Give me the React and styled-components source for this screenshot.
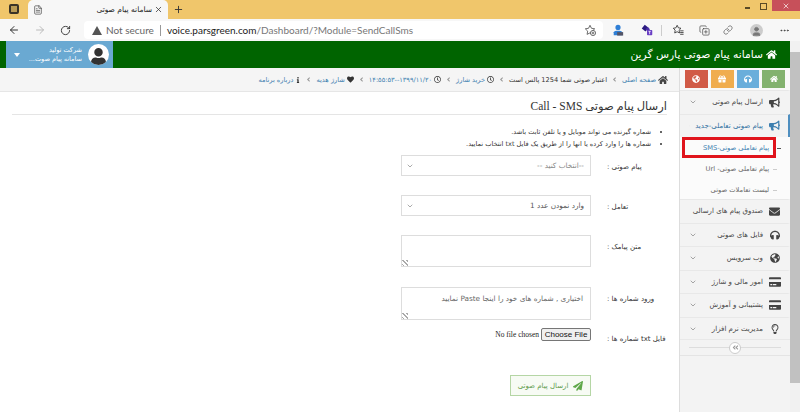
import * as React from 'react';
import styled, { createGlobalStyle } from 'styled-components';
import {
  FaHome, FaBullhorn, FaEnvelope, FaHeadphones, FaGlobeAmericas, FaCreditCard, FaRegLightbulb,
  FaPaperPlane, FaRegClock, FaHeart, FaInfo, FaUser, FaGift, FaAngleLeft, FaAngleDoubleLeft,
} from 'react-icons/fa';
import { ArrowLeft, ArrowRight, RotateCw, X, Plus, MoreHorizontal, Link, FileText, User, ChevronDown, CopyPlus } from 'lucide-react';

const PERSIAN = '"DejaVu Sans", "Noto Sans", sans-serif';

const GlobalStyle = createGlobalStyle`
  html, body { margin: 0; padding: 0; height: 412px; overflow: hidden; background: #fff; }
  * { box-sizing: border-box; }
`;

const Window = styled.div`
  width: 800px;
  height: 412px;
  display: flex;
  flex-direction: column;
  font-family: ${PERSIAN};
  overflow: hidden;
`;

/* browser chrome */
const TabStrip = styled.div`
  height: 19px;
  flex: none;
  background: #f0c66b;
  display: flex;
  align-items: flex-end;
  padding-left: 9px;
  color: #333;
`;

const WorkspaceIcon = styled.span`
  width: 10px;
  height: 10px;
  margin: 0 9px 5px 0;
  border: 2px solid #3a3327;
  border-radius: 2px;
  background: #b89a55;
`;

const Tab = styled.div`
  width: 140px;
  height: 19px;
  background: #f7f7f7;
  border-radius: 5px 5px 0 0;
  display: flex;
  align-items: center;
  padding: 0 5px;
`;

const TabTitle = styled.span`
  flex: 1;
  text-align: right;
  font-size: 7.5px;
  padding-right: 2px;
  color: #222;
`;

const NewTab = styled.span`
  margin: 0 0 4px 5px;
  display: flex;
`;

const WindowButtons = styled.div`
  flex: 1;
  align-self: flex-start;
  height: 19px;
  display: flex;
  justify-content: flex-end;
  align-items: flex-start;
`;

const MinButton = styled.span`
  width: 5px;
  height: 2px;
  margin: 7px 10px 0 0;
  background: #5a4a25;
`;

const RestoreButton = styled.span`
  width: 7px;
  height: 7px;
  margin: 3px 5px 0 0;
  border: 1px solid #5a4a25;
`;

const CloseButton = styled.span`
  width: 28px;
  height: 11px;
  background: #c7505a;
  color: #fff;
  display: flex;
  align-items: center;
  justify-content: center;
`;

const Toolbar = styled.div`
  height: 22px;
  flex: none;
  background: #f7f7f7;
  display: flex;
  align-items: center;
  padding-left: 8px;
`;

const NavButton = styled.span`
  width: 26px;
  display: flex;
  color: ${(p) => (p.$off ? '#bbb' : '#333')};
`;

const AddressBar = styled.div`
  width: 519px;
  height: 18px;
  margin-left: -2px;
  background: #fff;
  border-radius: 4px;
  display: flex;
  align-items: center;
  padding: 0 7px 0 8px;
  font-family: "Lato", sans-serif;
  font-size: 10px;
  white-space: nowrap;
`;

const WarningTriangle = styled.span`
  width: 0;
  height: 0;
  margin-right: 4px;
  border-left: 5px solid transparent;
  border-right: 5px solid transparent;
  border-bottom: 9px solid #555;
`;

const NotSecure = styled.span`
  color: #666;
  padding-right: 6px;
  margin-right: 6px;
  border-right: 1px solid #999;
  line-height: 11px;
`;

const Host = styled.span`
  color: #222;
`;

const UrlPath = styled.span`
  color: #777;
  flex: 1;
`;

const ToolIcons = styled.div`
  flex: 1;
  display: flex;
  align-items: center;
  color: #444;
`;

const ToolSlot = styled.span`
  width: ${(p) => p.$w || 12}px;
  margin-left: ${(p) => p.$gap}px;
  display: flex;
  justify-content: center;
`;

const ToolDivider = styled.span`
  width: 1px;
  height: 11px;
  background: #ccc;
  margin-left: 8px;
`;

const Avatar = styled.span`
  width: 13px;
  height: 13px;
  flex: none;
  border-radius: 50%;
  background: #ccc;
  color: #777;
  display: flex;
  align-items: flex-end;
  justify-content: center;
  overflow: hidden;
`;

/* page */
const Viewport = styled.div`
  flex: 1;
  display: flex;
  min-height: 0;
`;

const Page = styled.div`
  width: 790px;
  display: flex;
  flex-direction: column;
`;

const Scrollbar = styled.div`
  width: 10px;
  background: #f1f1f1;
  padding-top: 11px;
`;

const ScrollThumb = styled.div`
  height: 331px;
  background: #c1c1c1;
`;

const Header = styled.header`
  height: 27px;
  background: #006400;
  display: flex;
  align-items: center;
  justify-content: space-between;
  padding: 0 13px 0 6px;
`;

const UserBlock = styled.div`
  width: 107px;
  height: 27px;
  background: #6aa9d2;
  display: flex;
  align-items: center;
  padding: 0 4px 0 8px;
  color: #fff;
`;

const Caret = styled.span`
  width: 0;
  height: 0;
  border-left: 3.5px solid transparent;
  border-right: 3.5px solid transparent;
  border-top: 4px solid #fff;
`;

const UserText = styled.div`
  flex: 1;
  text-align: right;
  padding-right: 6px;
  font-size: 6.5px;
  line-height: 9px;
`;

const UserAvatar = styled.span`
  width: 21px;
  height: 21px;
  border-radius: 50%;
  background: #fff;
  color: #333;
  display: flex;
  align-items: flex-end;
  justify-content: center;
  overflow: hidden;
`;

const SiteTitle = styled.div`
  color: #fff;
  font-size: 10.7px;
  display: flex;
  align-items: center;
  gap: 3px;
`;

const Body = styled.div`
  flex: 1;
  display: flex;
  min-height: 0;
`;

const Main = styled.main`
  width: 680px;
  border-right: 1px solid #ddd;
  background: #fff;
`;

const Breadcrumb = styled.nav`
  height: 24px;
  background: #f5f5f5;
  border-bottom: 1px solid #e6e6e6;
  display: flex;
  align-items: center;
  gap: 4px;
  padding: 0 11px 0 0;
  font-size: 6.6px;
  white-space: nowrap;
`;

const Crumb = styled.span`
  display: flex;
  align-items: center;
  gap: 2px;
  color: ${(p) => (p.$plain ? '#333' : '#3d7fb0')};
`;

const CrumbSep = styled.span`
  display: flex;
  color: #999;
`;

const Heading = styled.h1`
  margin: 0 12px;
  height: 23px;
  padding-top: 6px;
  border-bottom: 1px solid #e5e5e5;
  font-family: "Liberation Serif", ${PERSIAN};
  font-size: 11.5px;
  font-weight: 400;
  line-height: 16px;
  color: #333;
`;

const Notes = styled.ul`
  margin: 11px 0 0;
  padding: 0 28px 0 0;
  font-size: 6.6px;
  line-height: 12px;
  color: #333;
  height: 29px;
`;

const Form = styled.form`
  direction: ltr;
  display: flex;
  flex-direction: column;
  padding-left: 401px;
`;

const Row = styled.div`
  display: flex;
  gap: 16px;
  margin-bottom: ${(p) => p.$after}px;
`;

const FieldSlot = styled.div`
  width: 190px;
  flex: none;
`;

const FieldLabel = styled.label`
  direction: rtl;
  text-align: left;
  padding-top: ${(p) => p.$top}px;
  font-size: 7px;
  line-height: 10px;
  color: #333;
  white-space: nowrap;
`;

const SelectBox = styled.div`
  height: 21px;
  border: 1px solid #ddd;
  background: #fff;
  display: flex;
  align-items: center;
  justify-content: space-between;
  padding: 0 6px 0 4px;
  font-size: 7.3px;
  color: ${(p) => (p.$muted ? '#888' : '#555')};
`;

const TextBox = styled.textarea`
  display: block;
  width: 190px;
  height: ${(p) => p.$h}px;
  direction: rtl;
  margin: 0;
  padding: 5px 7px;
  border: 1px solid #ddd;
  outline: none;
  resize: none;
  font-family: ${PERSIAN};
  font-size: 7.3px;
  line-height: 12px;
  color: #555;
  background: repeating-linear-gradient(45deg, transparent 0 1px, #aaa 1px 2px, transparent 2px 3px) left bottom / 6px 6px no-repeat #fff;
  &::placeholder { color: #666; opacity: 1; }
`;

const FileRow = styled.div`
  display: flex;
  justify-content: flex-end;
  align-items: center;
  gap: 2px;
  font-family: "Liberation Serif", serif;
  font-size: 7.5px;
  color: #222;
`;

const ChooseFile = styled.button`
  width: 50px;
  height: 13px;
  padding: 0;
  border: 1px solid #767676;
  border-radius: 2px;
  background: #efefef;
  font-family: "Liberation Sans", sans-serif;
  font-size: 8px;
  color: #111;
`;

const SendRow = styled.div`
  display: flex;
  justify-content: flex-end;
`;

const SendButton = styled.button`
  width: 81px;
  height: 21px;
  direction: rtl;
  display: flex;
  align-items: center;
  justify-content: center;
  gap: 5px;
  padding: 0;
  border: 1px solid #b5d6a5;
  background: #f7fbf4;
  font-family: ${PERSIAN};
  font-size: 7px;
  color: #5c9a4a;
`;

/* sidebar */
const Sidebar = styled.aside`
  width: 110px;
  background: #f3f3f3;
  direction: rtl;
  display: flex;
  flex-direction: column;
`;

const Shortcuts = styled.div`
  height: 22px;
  display: flex;
  gap: 3px;
  padding: 2px 5px 0 5px;
  background: #f8f8f8;
`;

const Shortcut = styled.span`
  flex: 1;
  height: 18px;
  background: ${(p) => p.$color};
  color: #fff;
  display: flex;
  align-items: center;
  justify-content: center;
`;

const MenuItem = styled.div`
  height: ${(p) => p.$h || 23.5}px;
  display: flex;
  align-items: center;
  gap: 5px;
  padding: 0 7px 0 9px;
  border-top: 1px solid #e8e8e8;
  border-right: 2px solid ${(p) => (p.$active ? '#4f8fc0' : 'transparent')};
  font-size: 7px;
  color: ${(p) => (p.$active ? '#2f6f9f' : '#444')};
  white-space: nowrap;
`;

const MenuIcon = styled.span`
  width: 13px;
  flex: none;
  display: flex;
  justify-content: center;
  color: ${(p) => (p.$active ? '#3d7fb0' : '#444')};
`;

const MenuText = styled.span`
  flex: 1;
`;

const SubMenu = styled.div`
  background: #fbfbfb;
`;

const SubItem = styled.div`
  position: relative;
  height: ${(p) => p.$h}px;
  display: flex;
  align-items: center;
  justify-content: flex-start;
  padding-right: ${(p) => (p.$flagged ? 4 : 21)}px;
  margin: ${(p) => (p.$flagged ? '0 14px 0 2px' : '0')};
  border: ${(p) => (p.$flagged ? '3px solid #e0141c' : '0')};
  font-size: 6.7px;
  color: ${(p) => (p.$flagged ? '#3d7fb0' : '#666')};
  white-space: nowrap;
  &::after {
    content: '';
    position: absolute;
    top: 50%;
    right: ${(p) => (p.$flagged ? -8 : 13)}px;
    width: 4px;
    height: 1px;
    background: ${(p) => (p.$flagged ? '#555' : '#ccc')};
  }
`;

const Collapse = styled.div`
  height: 17px;
  margin-top: -1px;
  border-top: 1px solid #e8e8e8;
  border-bottom: 1px solid #e4e4e4;
  display: flex;
  align-items: center;
  justify-content: center;
  background: linear-gradient(#ddd, #ddd) center / 92px 1px no-repeat;
`;

const CollapseButton = styled.span`
  width: 12px;
  height: 12px;
  border: 1px solid #ccc;
  border-radius: 50%;
  background: #fff;
  color: #999;
  display: flex;
  align-items: center;
  justify-content: center;
`;

const Chevron = () => <ChevronDown size={8} color="#555" strokeWidth={1.5} />;

const CrumbArrow = () => (
  <CrumbSep>
    <FaAngleLeft size={7} />
  </CrumbSep>
);

const STAR = 'M7 1.5l1.7 3.5 3.8.6-2.8 2.7.7 3.8L7 10.3l-3.4 1.8.7-3.8L1.5 5.6l3.8-.6z';

const FavoriteAdd = () => (
  <svg width="12" height="12" viewBox="0 0 14 14" fill="none" stroke="#555" strokeWidth="1">
    <path d={STAR} />
    <circle cx="10.5" cy="10.5" r="3" fill="#fff" />
    <path d="M10.5 9v3M9 10.5h3" />
  </svg>
);

const FavoritesList = () => (
  <svg width="12" height="12" viewBox="0 0 14 14" fill="none" stroke="#333" strokeWidth="1">
    <path d="M6 1.5l1.5 3 3 .5-2.2 2.2.5 3.3L6 9l-2.8 1.5.5-3.3L1.5 5l3-.5z" />
    <path d="M9.5 8h4M9.5 10h4M9.5 12h4" />
  </svg>
);

const ProfileExtension = () => (
  <svg width="12" height="12" viewBox="0 0 14 14">
    <circle cx="7" cy="4" r="3" fill="#2f7fd6" />
    <path d="M2 9.5c1-2 9-2 10 0V13H2z" fill="#2f7fd6" />
    <rect x="6" y="9.5" width="7" height="4" fill="#556" />
  </svg>
);

const TeamExtension = () => (
  <svg width="14" height="12" viewBox="0 0 16 14">
    <path d="M5 0l5 4-4 5-5-4z" fill="#2b1a80" />
    <path d="M9 3l3 3-3 3-3-3z" fill="#4b2fa8" />
    <rect x="8" y="7" width="7" height="7" rx="1" fill="#6a3fc4" />
    <path d="M10 8.8h3M11.5 8.8v3.8" stroke="#fff" strokeWidth="1" />
  </svg>
);

const menuAfter = [
  { label: 'فایل های صوتی', icon: <FaHeadphones size={10} /> },
  { label: 'وب سرویس', icon: <FaGlobeAmericas size={10} /> },
  { label: 'امور مالی و شارژ', icon: <FaCreditCard size={12} /> },
  { label: 'پشتیبانی و آموزش', icon: <FaCreditCard size={12} /> },
  { label: 'مدیریت نرم افزار', icon: <FaRegLightbulb size={10} /> },
];

const App = () => (
  <Window>
    <GlobalStyle />
    <TabStrip>
      <WorkspaceIcon />
      <Tab>
        <FileText size={10} strokeWidth={1.5} />
        <TabTitle dir="rtl">سامانه پیام صوتی</TabTitle>
        <X size={9} />
      </Tab>
      <NewTab>
        <Plus size={11} />
      </NewTab>
      <WindowButtons>
        <MinButton />
        <RestoreButton />
        <CloseButton>
          <X size={8} />
        </CloseButton>
      </WindowButtons>
    </TabStrip>

    <Toolbar>
      <NavButton><ArrowLeft size={12} /></NavButton>
      <NavButton $off><ArrowRight size={12} /></NavButton>
      <NavButton><RotateCw size={11} /></NavButton>
      <AddressBar>
        <WarningTriangle />
        <NotSecure>Not secure</NotSecure>
        <Host>voice.parsgreen.com</Host>
        <UrlPath>/Dashboard/?Module=SendCallSms</UrlPath>
        <FavoriteAdd />
      </AddressBar>
      <ToolIcons>
        <ToolSlot $gap={9}><ProfileExtension /></ToolSlot>
        <ToolSlot $gap={17}><TeamExtension /></ToolSlot>
        <ToolDivider />
        <ToolSlot $gap={10}><FavoritesList /></ToolSlot>
        <ToolSlot $gap={14}><CopyPlus size={11} strokeWidth={1.5} /></ToolSlot>
        <ToolSlot $gap={12}><Link size={10} strokeWidth={1.5} /></ToolSlot>
        <ToolSlot $gap={16}><Avatar><User size={11} fill="#777" /></Avatar></ToolSlot>
        <ToolSlot $gap={16}><MoreHorizontal size={11} /></ToolSlot>
      </ToolIcons>
    </Toolbar>

    <Viewport>
      <Page>
        <Header>
          <UserBlock>
            <Caret />
            <UserText dir="rtl">
              شرکت تولید
              <br />
              سامانه پیام صوت...
            </UserText>
            <UserAvatar><FaUser size={17} /></UserAvatar>
          </UserBlock>
          <SiteTitle dir="rtl">
            <FaHome size={11} />
            سامانه پیام صوتی پارس گرین
          </SiteTitle>
        </Header>

        <Body>
          <Main dir="rtl">
            <Breadcrumb>
              <Crumb><FaHome size={10} color="#444" />صفحه اصلی</Crumb>
              <CrumbArrow />
              <Crumb $plain>اعتبار صوتی شما 1254 پالس است</Crumb>
              <CrumbArrow />
              <Crumb><FaRegClock size={7} color="#333" />خرید شارژ</Crumb>
              <CrumbArrow />
              <Crumb><FaRegClock size={7} color="#333" />۱۳۹۹/۱۱/۲۰--۱۴:۵۵:۵۳</Crumb>
              <CrumbArrow />
              <Crumb><FaHeart size={7} color="#333" />شارژ هدیه</Crumb>
              <CrumbArrow />
              <Crumb><FaInfo size={6} color="#333" />درباره برنامه</Crumb>
            </Breadcrumb>

            <Heading>ارسال پیام صوتی Call - SMS</Heading>

            <Notes>
              <li>شماره گیرنده می تواند موبایل و یا تلفن ثابت باشد.</li>
              <li>شماره ها را وارد کرده یا انها را از طریق یک فایل txt انتخاب نمایید.</li>
            </Notes>

            <Form>
              <Row $after={19}>
                <FieldSlot>
                  <SelectBox $muted>
                    <Chevron />
                    <span dir="rtl">--انتخاب کنید --</span>
                  </SelectBox>
                </FieldSlot>
                <FieldLabel $top={7}>پیام صوتی :</FieldLabel>
              </Row>
              <Row $after={19}>
                <FieldSlot>
                  <SelectBox>
                    <Chevron />
                    <span dir="rtl">وارد نمودن عدد 1</span>
                  </SelectBox>
                </FieldSlot>
                <FieldLabel $top={7}>تعامل :</FieldLabel>
              </Row>
              <Row $after={20}>
                <FieldSlot><TextBox $h={32} /></FieldSlot>
                <FieldLabel $top={7}>متن پیامک :</FieldLabel>
              </Row>
              <Row $after={8}>
                <FieldSlot>
                  <TextBox $h={33} placeholder="اختیاری , شماره های خود را اینجا Paste نمایید" />
                </FieldSlot>
                <FieldLabel $top={7}>ورود شماره ها :</FieldLabel>
              </Row>
              <Row $after={31}>
                <FieldSlot>
                  <FileRow>
                    <span>No file chosen</span>
                    <ChooseFile type="button">Choose File</ChooseFile>
                  </FileRow>
                </FieldSlot>
                <FieldLabel $top={6}>فایل txt شماره ها :</FieldLabel>
              </Row>
              <Row $after={0}>
                <FieldSlot>
                  <SendRow>
                    <SendButton type="button">
                      <FaPaperPlane size={10} color="#5fa84a" />
                      ارسال پیام صوتی
                    </SendButton>
                  </SendRow>
                </FieldSlot>
              </Row>
            </Form>
          </Main>

          <Sidebar>
            <Shortcuts>
              <Shortcut $color="#83b26f"><FaHome size={8} /></Shortcut>
              <Shortcut $color="#6aaedb"><FaHeadphones size={8} /></Shortcut>
              <Shortcut $color="#f0ad4e"><FaGift size={8} /></Shortcut>
              <Shortcut $color="#d15b47"><FaGlobeAmericas size={8} /></Shortcut>
            </Shortcuts>
            <MenuItem>
              <MenuIcon><FaBullhorn size={11} /></MenuIcon>
              <MenuText>ارسال پیام صوتی</MenuText>
              <Chevron />
            </MenuItem>
            <MenuItem $active>
              <MenuIcon $active><FaBullhorn size={11} /></MenuIcon>
              <MenuText>پیام صوتی تعاملی-جدید</MenuText>
              <Chevron />
            </MenuItem>
            <SubMenu>
              <SubItem $flagged $h={21}>پیام تعاملی صوتی-SMS</SubItem>
              <SubItem $h={22}>پیام تعاملی صوتی- Url</SubItem>
              <SubItem $h={19}>لیست تعاملات صوتی</SubItem>
            </SubMenu>
            <MenuItem>
              <MenuIcon><FaEnvelope size={11} /></MenuIcon>
              <MenuText>صندوق پیام های ارسالی</MenuText>
            </MenuItem>
            {menuAfter.map((item) => (
              <MenuItem key={item.label}>
                <MenuIcon>{item.icon}</MenuIcon>
                <MenuText>{item.label}</MenuText>
                <Chevron />
              </MenuItem>
            ))}
            <Collapse>
              <CollapseButton><FaAngleDoubleLeft size={7} /></CollapseButton>
            </Collapse>
          </Sidebar>
        </Body>
      </Page>
      <Scrollbar>
        <ScrollThumb />
      </Scrollbar>
    </Viewport>
  </Window>
);

export default App;
